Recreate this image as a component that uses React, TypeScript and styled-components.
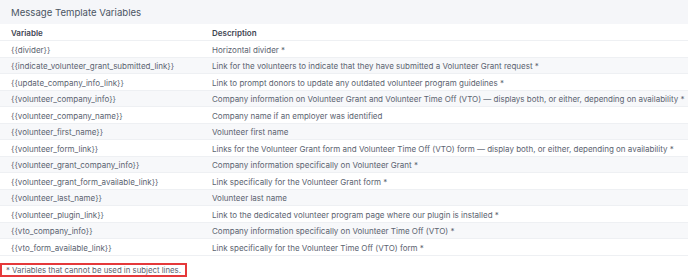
import { styled, createGlobalStyle } from "styled-components";

const GlobalStyle = createGlobalStyle`
  body {
    margin: 0;
    background: #ffffff;
    font-family: Inter, "Noto Sans", sans-serif;
  }
`;

type Variable = {
  name: string;
  description: string;
};

const variables: Variable[] = [
  { name: "{{divider}}", description: "Horizontal divider *" },
  {
    name: "{{indicate_volunteer_grant_submitted_link}}",
    description:
      "Link for the volunteers to indicate that they have submitted a Volunteer Grant request *",
  },
  {
    name: "{{update_company_info_link}}",
    description:
      "Link to prompt donors to update any outdated volunteer program guidelines *",
  },
  {
    name: "{{volunteer_company_info}}",
    description:
      "Company information on Volunteer Grant and Volunteer Time Off (VTO) — displays both, or either, depending on availability *",
  },
  {
    name: "{{volunteer_company_name}}",
    description: "Company name if an employer was identified",
  },
  { name: "{{volunteer_first_name}}", description: "Volunteer first name" },
  {
    name: "{{volunteer_form_link}}",
    description:
      "Links for the Volunteer Grant form and Volunteer Time Off (VTO) form — display both, or either, depending on availability *",
  },
  {
    name: "{{volunteer_grant_company_info}}",
    description: "Company information specifically on Volunteer Grant *",
  },
  {
    name: "{{volunteer_grant_form_available_link}}",
    description: "Link specifically for the Volunteer Grant form *",
  },
  { name: "{{volunteer_last_name}}", description: "Volunteer last name" },
  {
    name: "{{volunteer_plugin_link}}",
    description:
      "Link to the dedicated volunteer program page where our plugin is installed *",
  },
  {
    name: "{{vto_company_info}}",
    description:
      "Company information specifically on Volunteer Time Off (VTO) *",
  },
  {
    name: "{{vto_form_available_link}}",
    description: "Link specifically for the Volunteer Time Off (VTO) form *",
  },
];

const Panel = styled.section`
  width: 688px;
`;

const PanelHeader = styled.div`
  display: flex;
  align-items: center;
  height: 24px;
  padding: 0 11px;
  background: #f5f6f9;
  color: #4b5563;
  font-size: 9.6px;
`;

const Table = styled.div`
  display: flex;
  flex-direction: column;
  font-size: 8px;
`;

const Row = styled.div<{ $head?: boolean }>`
  display: grid;
  grid-template-columns: 201px 1fr;
  align-items: center;
  box-sizing: border-box;
  height: ${(props) => (props.$head ? "17px" : "16.5px")};
  padding-top: 1.5px;
  border-bottom: 1px solid #eef0f3;
  font-weight: ${(props) => (props.$head ? 600 : 400)};
  color: ${(props) => (props.$head ? "#3f4652" : "#5b6370")};

  &:nth-child(odd) {
    background: ${(props) => (props.$head ? "#ffffff" : "#f7f8fa")};
  }
`;

const Cell = styled.div`
  padding: 0 11px;
  white-space: nowrap;
`;

const Note = styled.div`
  display: inline-block;
  margin-top: 7px;
  padding: 0 4px 0 4px;
  border: 2px solid #e5393b;
  color: #5b6370;
  font-size: 7.8px;
  line-height: 10px;
`;

export default function App() {
  return (
    <>
      <GlobalStyle />
      <Panel>
        <PanelHeader>Message Template Variables</PanelHeader>
        <Table>
          <Row $head>
            <Cell>Variable</Cell>
            <Cell>Description</Cell>
          </Row>
          {variables.map((v) => (
            <Row key={v.name}>
              <Cell>{v.name}</Cell>
              <Cell>{v.description}</Cell>
            </Row>
          ))}
        </Table>
        <Note>* Variables that cannot be used in subject lines.</Note>
      </Panel>
    </>
  );
}
